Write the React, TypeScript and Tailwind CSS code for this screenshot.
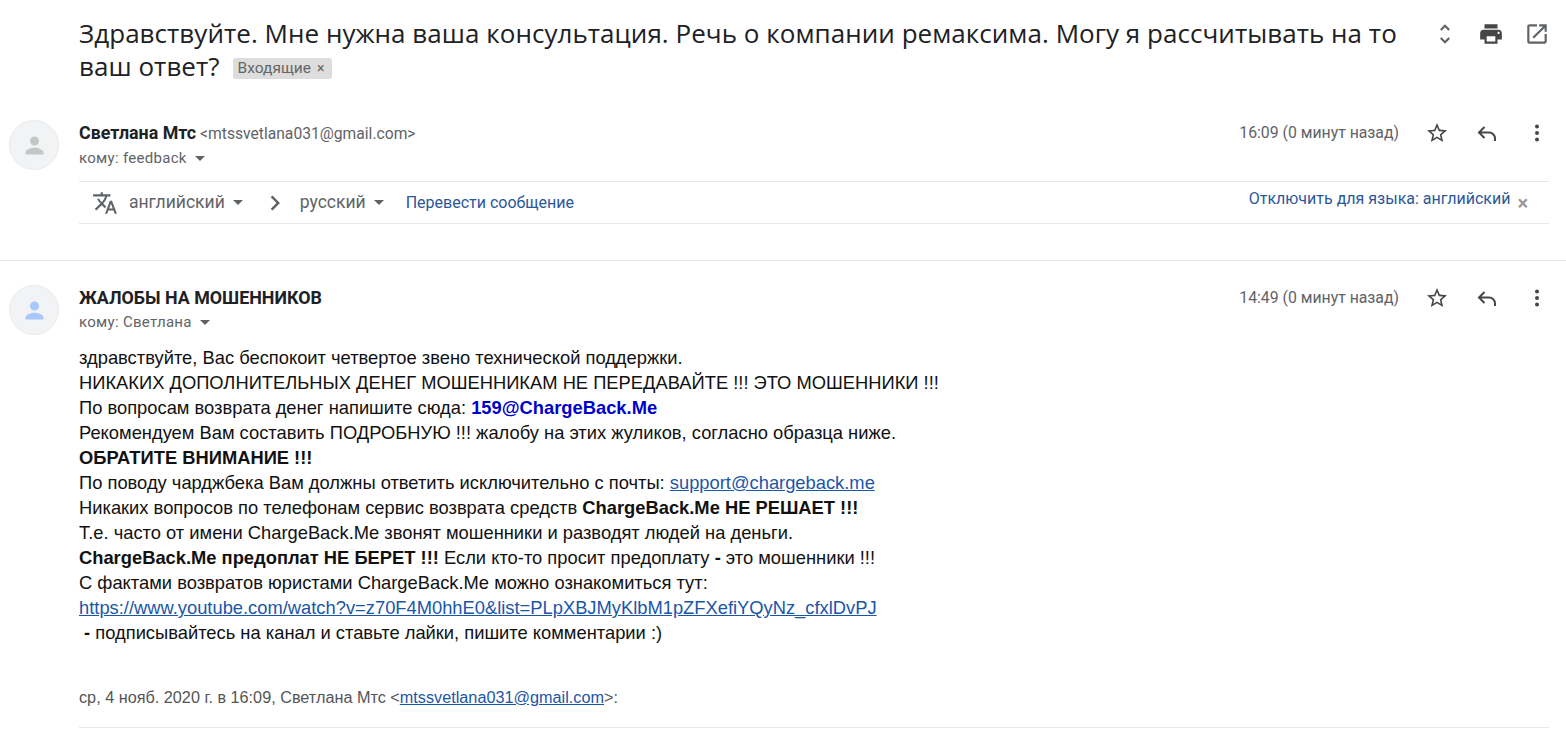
import React from "react";

const Icon = ({ d, className }: { d: string; className: string }) => (
  <svg viewBox="0 0 24 24" className={className} fill="currentColor">
    <path d={d} />
  </svg>
);

const Caret = ({ className }: { className: string }) => (
  <span className={`inline-block w-0 h-0 border-x-[5px] border-x-transparent border-t-[5px] ${className}`} />
);

const PERSON = "M12 12a4 4 0 1 0 0-8 4 4 0 0 0 0 8zm0 2c-3 0-8 1.5-8 4.2V20h16v-1.8c0-2.7-5-4.2-8-4.2z";

function Avatar({ tone }: { tone: string }) {
  return (
    <div className="w-[50px] h-[50px] rounded-full bg-[#f1f3f4] border border-[#e8eaed] flex items-center justify-center shrink-0">
      <Icon d={PERSON} className={`w-[27px] h-[27px] ${tone}`} />
    </div>
  );
}

function MessageActions({ time }: { time: string }) {
  return (
    <div className="flex items-center h-[26px] text-[#5f6368] shrink-0">
      <span className="text-[15.8px] mr-[26px] font-['Roboto',sans-serif]">{time}</span>
      <Icon
        d="M22 9.24l-7.19-.62L12 2 9.19 8.63 2 9.24l5.46 4.73L5.82 21 12 17.27 18.18 21l-1.63-7.03L22 9.24zM12 15.4l-3.76 2.27 1-4.28-3.32-2.88 4.38-.38L12 6.1l1.71 4.04 4.38.38-3.32 2.88 1 4.28L12 15.4z"
        className="w-[24px] h-[24px] text-[#444746]"
      />
      <svg viewBox="0 0 24 24" className="w-[24px] h-[24px] ml-[26px] text-[#444746]" fill="none" stroke="currentColor" strokeWidth="2">
        <path d="M9.5 6 4 11.5 9.5 17M4 11.5h10a6 6 0 0 1 6 6V20" />
      </svg>
      <svg viewBox="0 0 24 24" className="w-[24px] h-[24px] ml-[26px] text-[#444746]" fill="currentColor">
        <circle cx="12" cy="5.5" r="2" />
        <circle cx="12" cy="12" r="2" />
        <circle cx="12" cy="18.5" r="2" />
      </svg>
    </div>
  );
}

const Link = ({ children }: { children: React.ReactNode }) => (
  <a className="text-[#1a56a8] underline">{children}</a>
);

export default function App() {
  return (
    <div className="w-[1566px] h-[730px] overflow-hidden bg-white font-['Roboto',sans-serif] text-[#202124]">
      <div className="flex items-start pl-[79px] pt-[17px] pr-[16px]">
        <h1 className="w-[1340px] text-[26px] leading-[33px] font-normal font-['Open_Sans',sans-serif] tracking-[0.04px]">
          Здравствуйте. Мне нужна ваша консультация. Речь о компании ремаксима. Могу я рассчитывать на то ваш ответ?
          <span className="inline-flex items-center h-[21px] ml-[13px] px-[5px] rounded-[3px] bg-[#dddddd] text-[#666666] text-[15.5px] font-['Roboto',sans-serif] align-[3px] tracking-normal">
            Входящие
            <span className="ml-[6px] mr-[3px] text-[14px]">×</span>
          </span>
        </h1>
        <div className="flex items-center ml-auto mt-[4px] text-[#5f6368] gap-[20px]">
          <Icon
            d="M12 5.83L15.17 9l1.41-1.41L12 3 7.41 7.59 8.83 9 12 5.83zm0 12.34L8.83 15l-1.41 1.41L12 21l4.59-4.59L15.17 15 12 18.17z"
            className="w-[26px] h-[26px]"
          />
          <Icon
            d="M19 8H5c-1.66 0-3 1.34-3 3v6h4v4h12v-4h4v-6c0-1.66-1.34-3-3-3zm-3 11H8v-5h8v5zm3-7c-.55 0-1-.45-1-1s.45-1 1-1 1 .45 1 1-.45 1-1 1zm-1-9H6v4h12V3z"
            className="w-[26px] h-[26px] text-[#444746]"
          />
          <Icon
            d="M19 19H5V5h7V3H5c-1.11 0-2 .9-2 2v14c0 1.1.89 2 2 2h14c1.1 0 2-.9 2-2v-7h-2v7zM14 3v2h3.59l-9.83 9.83 1.41 1.41L19 6.41V10h2V3h-7z"
            className="w-[26px] h-[26px]"
          />
        </div>
      </div>

      <div className="flex pl-[9px] pr-[17px] mt-[37px]">
        <Avatar tone="text-[#c4c7c5]" />
        <div className="flex-1 ml-[20px]">
          <div className="flex justify-between">
            <div className="leading-[26px]">
              <span className="text-[17.85px] font-bold">Светлана Мтс</span>
              <span className="text-[15.65px] text-[#5f6368] ml-[4px]">&lt;mtssvetlana031@gmail.com&gt;</span>
            </div>
            <MessageActions time="16:09 (0 минут назад)" />
          </div>
          <div className="flex items-center text-[15px] text-[#5f6368] h-[22px] tracking-[0.3px]">
            кому: feedback <Caret className="ml-[8px] border-t-[#5f6368]" />
          </div>
          <div className="mt-[12px] h-[43px] border-y border-[#e8e8e8] flex items-center text-[#5f6368] text-[17.5px]">
            <Icon
              d="M12.87 15.07l-2.54-2.51.03-.03c1.74-1.94 2.98-4.17 3.71-6.53H17V4h-7V2H8v2H1v1.99h11.17C11.5 7.92 10.44 9.75 9 11.35 8.07 10.32 7.3 9.19 6.69 8h-2c.73 1.63 1.73 3.17 2.98 4.56l-5.09 5.02L4 19l5-5 3.11 3.11.76-2.04zM18.5 10h-2L12 22h2l1.12-3h4.75L21 22h2l-4.5-12zm-2.62 7l1.62-4.33L19.12 17h-3.24z"
              className="w-[26px] h-[26px] ml-[13px]"
            />
            <span className="ml-[11px]">английский</span>
            <Caret className="ml-[8px] border-t-[#5f6368]" />
            <Icon d="M10 6L8.59 7.41 13.17 12l-4.58 4.59L10 18l6-6z" className="w-[30px] h-[30px] ml-[17px]" />
            <span className="ml-[10px]">русский</span>
            <Caret className="ml-[8px] border-t-[#5f6368]" />
            <span className="ml-[22px] text-[16px] text-[#2b579a]">Перевести сообщение</span>
            <span className="ml-auto mb-[8px] text-[16px] text-[#2b579a]">Отключить для языка: английский</span>
            <span className="ml-[7px] mr-[21px] text-[20px] font-bold leading-none text-[#999999]">×</span>
          </div>
        </div>
      </div>

      <div className="mt-[36px] border-t border-[#e8e8e8] flex pl-[9px] pr-[17px] pt-[24px]">
        <Avatar tone="text-[#a8c7fa]" />
        <div className="flex-1 ml-[20px]">
          <div className="flex justify-between">
            <div className="leading-[26px] text-[17.85px] font-bold">ЖАЛОБЫ НА МОШЕННИКОВ</div>
            <MessageActions time="14:49 (0 минут назад)" />
          </div>
          <div className="flex items-center text-[15px] text-[#5f6368] h-[22px] tracking-[0.3px]">
            кому: Светлана <Caret className="ml-[8px] border-t-[#5f6368]" />
          </div>
          <div className="mt-[12px] text-[18.33px] leading-[25px] text-[#111111] font-['Liberation_Sans',Arial,sans-serif]">
            <div>здравствуйте, Вас беспокоит четвертое звено технической поддержки.</div>
            <div>НИКАКИХ ДОПОЛНИТЕЛЬНЫХ ДЕНЕГ МОШЕННИКАМ НЕ ПЕРЕДАВАЙТЕ !!! ЭТО МОШЕННИКИ !!!</div>
            <div>
              По вопросам возврата денег напишите сюда: <b className="text-[#0000cc]">159@ChargeBack.Me</b>
            </div>
            <div>Рекомендуем Вам составить ПОДРОБНУЮ !!! жалобу на этих жуликов, согласно образца ниже.</div>
            <div>
              <b>ОБРАТИТЕ ВНИМАНИЕ !!!</b>
            </div>
            <div>
              По поводу чарджбека Вам должны ответить исключительно с почты: <Link>support@chargeback.me</Link>
            </div>
            <div>
              Никаких вопросов по телефонам сервис возврата средств <b>ChargeBack.Me НЕ РЕШАЕТ !!!</b>
            </div>
            <div>Т.е. часто от имени ChargeBack.Me звонят мошенники и разводят людей на деньги.</div>
            <div>
              <b>ChargeBack.Me предоплат НЕ БЕРЕТ !!!</b> Если кто-то просит предоплату <b>-</b> это мошенники !!!
            </div>
            <div>С фактами возвратов юристами ChargeBack.Me можно ознакомиться тут:</div>
            <div>
              <Link>https://www.youtube.com/watch?v=z70F4M0hhE0&amp;list=PLpXBJMyKlbM1pZFXefiYQyNz_cfxlDvPJ</Link>
            </div>
            <div>
              &nbsp;<b>-</b> подписывайтесь на канал и ставьте лайки, пишите комментарии :)
            </div>
          </div>
          <div className="mt-[40px] text-[16.24px] leading-[25px] text-[#555555] font-['Liberation_Sans',Arial,sans-serif]">
            ср, 4 нояб. 2020 г. в 16:09, Светлана Мтс &lt;<Link>mtssvetlana031@gmail.com</Link>&gt;:
          </div>
          <div className="mt-[17px] border-t border-[#e8e8e8]" />
        </div>
      </div>
    </div>
  );
}
